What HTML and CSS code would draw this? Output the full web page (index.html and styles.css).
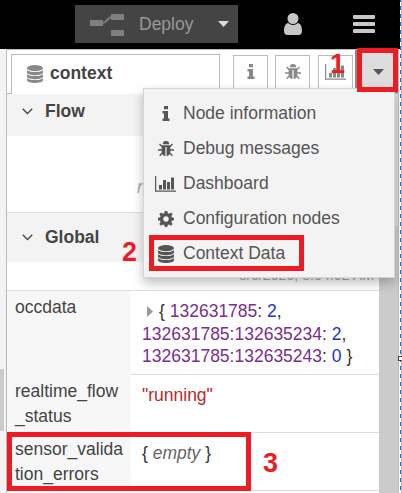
FILE: index.html
```html
<!DOCTYPE html>
<html lang="en">
<head>
<meta charset="utf-8">
<title>Context data</title>
<link rel="stylesheet" href="styles.css">
</head>
<body>
<svg class="defs" width="0" height="0">
  <symbol id="database" viewBox="0 0 16 18">
    <ellipse cx="8" cy="3.1" rx="8" ry="3.1"/>
    <path d="M0 5.200c3 2.500 13 2.500 16 0v2.500c-1 3.300-15 3.300-16 0z"/>
    <path d="M0 9.200c3 2.500 13 2.500 16 0v2.500c-1 3.300-15 3.300-16 0z"/>
    <path d="M0 13.200c3 2.500 13 2.500 16 0v2.100c-1 3.600-15 3.600-16 0z"/>
  </symbol>
  <symbol id="info" viewBox="0 0 8 15">
    <path d="M2 0h4v3.200H2zM.5 5H6v7.400h1.500V15h-7v-2.600H2V7.600H.5z"/>
  </symbol>
  <symbol id="bug" viewBox="0 0 16 16">
    <path d="M4.800 3.200a3.200 3.200 0 0 1 6.400 0z"/>
    <path d="M3.600 4.200h8.800V10c0 3.200-1.600 5-3.800 5V6H7.400v9c-2.200 0-3.800-1.800-3.800-5z"/>
    <path class="line" d="M4 5.400L1.500 2.900M12 5.400l2.500-2.500M4 9H0M12 9h4M4.200 12L1.700 14.700M11.800 12l2.500 2.700"/>
  </symbol>
  <symbol id="chart" viewBox="0 0 21 16">
    <path d="M0 0h1.200v14.600H21v1.200H0zM4 9h3v4.500H4zM8 4h3v9.500H8zM12 6h3v7.500h-3zM16 1.500h3v12h-3z"/>
  </symbol>
  <symbol id="gear" viewBox="0 0 16 16">
    <path fill-rule="evenodd" d="M6.700 0h2.600l.5 2.200 1.300.6L13 1.500 14.700 3.200 13.300 5l.6 1.500 2.100.3v2.500l-2.100.4-.6 1.400 1.300 1.800-1.700 1.800-1.900-1.300-1.300.6L9.300 16H6.700l-.4-2-1.400-.6L3 14.700l-1.700-1.800 1.300-1.800L2 9.700l-2-.4V6.800l2-.3L2.600 5 1.300 3.200 3 1.500l1.900 1.300 1.400-.6zM8 5.300a2.700 2.700 0 1 0 0 5.400 2.700 2.700 0 0 0 0-5.400z"/>
  </symbol>
</svg>
<div class="window">
  <header class="header">
    <button class="deploy">
      <svg class="deploy-icon" viewBox="0 0 34 24"><path d="M0 7h13v6H0zM21 1h13v6H21zM21 17h13v6H21z"/><path class="wire" d="M12 10.200c5 0 5-6.200 10-6.200"/></svg>
      <span>Deploy</span>
      <svg class="deploy-caret" viewBox="0 0 11 6"><path d="M0 0h11L5.500 6z"/></svg>
    </button>
    <svg class="user" viewBox="0 0 18 22"><circle cx="9" cy="5.500" r="5.500"/><path d="M4.200 10C1 10.500 0 14.500 0 18c0 2.500 1.300 4 3.500 4h11c2.200 0 3.500-1.500 3.500-4 0-3.500-1-7.500-4.200-8-2.600 2.600-7 2.600-9.600 0z"/></svg>
    <svg class="burger" viewBox="0 0 22 18"><rect width="22" height="4" rx="1"/><rect y="7" width="22" height="4" rx="1"/><rect y="14" width="22" height="4" rx="1"/></svg>
  </header>
  <div class="workspace">
    <div class="separator"><div class="grip"></div></div>
    <aside class="sidebar">
      <nav class="tabs">
        <div class="tab-active"><svg class="i-db"><use href="#database"/></svg><span>context</span></div>
        <div class="tab first"><svg class="i-info"><use href="#info"/></svg></div>
        <div class="tab second"><svg class="i-bug"><use href="#bug"/></svg></div>
        <div class="tab third"><svg class="i-chart"><use href="#chart"/></svg></div>
        <div class="tab-menu"><svg class="tab-caret" viewBox="0 0 11 6"><path d="M0 0h11L5.500 6z"/></svg></div>
      </nav>
      <div class="body">
        <div class="content">
          <h3 class="section flow"><svg class="chevron" viewBox="0 0 11 7"><path d="M.7.800l4.800 4.700L10.300.800"/></svg>Flow</h3>
          <div class="refresh"><em>re</em></div>
          <h3 class="section global"><svg class="chevron" viewBox="0 0 11 7"><path d="M.7.800l4.800 4.700L10.300.800"/></svg>Global</h3>
          <div class="stamp">8/6/2020, 8:04:02 AM</div>
          <div class="row occ">
            <div class="key">occdata</div>
            <div class="value"><svg class="expand" viewBox="0 0 6 11"><path d="M0 0l6 5.500L0 11z"/></svg>{ <b>132631785</b>: <i>2</i>,<br><b>132631785:132635234</b>: <i>2</i>,<br><b>132631785:132635243</b>: <i>0</i> }</div>
          </div>
          <div class="row status">
            <div class="key">realtime_flow<br>_status</div>
            <div class="value string">"running"</div>
          </div>
          <div class="row errors">
            <div class="key">sensor_valida<br>tion_errors</div>
            <div class="value">{ <em>empty</em> }</div>
          </div>
        </div>
        <div class="scroll"><div class="thumb"></div></div>
      </div>
    </aside>
  </div>
  <div class="menu">
    <div class="item"><span class="icon"><svg class="i-info"><use href="#info"/></svg></span>Node information</div>
    <div class="item"><span class="icon"><svg class="i-bug"><use href="#bug"/></svg></span>Debug messages</div>
    <div class="item"><span class="icon"><svg class="i-chart"><use href="#chart"/></svg></span>Dashboard</div>
    <div class="item"><span class="icon"><svg class="i-gear"><use href="#gear"/></svg></span>Configuration nodes</div>
    <div class="item"><span class="icon"><svg class="i-db"><use href="#database"/></svg></span>Context Data</div>
  </div>
  <div class="edge"></div>
  <div class="handle"></div>
  <div class="box box-one"></div>
  <div class="box box-two"></div>
  <div class="box box-three"></div>
  <div class="num num-one">1</div>
  <div class="num num-two">2</div>
  <div class="num num-three">3</div>
</div>
</body>
</html>
```
FILE: styles.css
```css
* { box-sizing: border-box; }
body {
  margin: 0;
  overflow: hidden;
  font: 17.5px/25px "Liberation Sans", Arial, sans-serif;
  color: #444;
}
svg { display: block; flex: none; fill: currentColor; }
.defs { position: absolute; }
.line { fill: none; stroke: currentColor; stroke-width: 1.4; }
.window {
  position: relative;
  width: 402px;
  height: 493px;
  overflow: hidden;
  display: flex;
  flex-direction: column;
  background: #fff;
}

.header {
  flex: none;
  height: 49px;
  display: flex;
  align-items: flex-start;
  padding: 5px 0 0 75px;
  background: #000;
  color: #c7c7c7;
}
.deploy {
  width: 163px;
  height: 38px;
  display: flex;
  align-items: center;
  padding: 0 0 0 15px;
  border: 0;
  background: #444;
  color: #999;
  font: inherit;
}
.deploy-icon { width: 34px; height: 24px; margin: 2px 15px 0 0; fill: #7f7f7f; }
.wire { fill: none; stroke: #7f7f7f; stroke-width: 2; }
.deploy-caret { width: 11px; height: 6px; margin-left: 25px; fill: #ddd; }
.user { width: 18px; height: 22px; margin: 8px 0 0 46px; }
.burger { width: 22px; height: 18px; margin: 10px 0 0 51px; }

.workspace { flex: 1; min-height: 0; display: flex; }
.separator { flex: none; width: 6px; padding-top: 320px; background: #f3f3f3; }
.grip { width: 4px; height: 62px; background: #ccc; }
.sidebar {
  width: 393px;
  display: flex;
  flex-direction: column;
  border: 1px solid #bbb;
  border-width: 1px 1px 0;
}
.tabs {
  flex: none;
  height: 44px;
  display: flex;
  align-items: flex-end;
  padding-left: 4px;
  border-bottom: 1px solid #bbb;
  color: #888;
}
.tab-active {
  width: 209px;
  height: 40px;
  margin-bottom: -1px;
  display: flex;
  align-items: center;
  gap: 7px;
  padding: 0 0 2px 15px;
  border: 1px solid #bbb;
  border-bottom: 0;
  background: #fff;
  font-weight: bold;
}
.tab-active span { color: #444; }
.tab {
  width: 35px;
  height: 38px;
  display: flex;
  justify-content: center;
  padding-top: 8px;
  border: 1px solid #bbb;
  border-bottom: 0;
}
.first { margin-left: 13px; }
.second { margin-left: 7px; }
.third { margin-left: 8px; }
.tab-menu {
  width: 43px;
  height: 43px;
  margin-left: 2px;
  padding: 19px 0 0 16px;
  border: 2px solid #888;
  border-top: 0;
  background: #ddd;
}
.tab-caret { width: 11px; height: 6px; fill: #555; }
.i-db { width: 16px; height: 18px; }
.i-info { width: 8px; height: 15px; }
.i-bug { width: 16px; height: 16px; }
.i-chart { width: 21px; height: 16px; }
.i-gear { width: 16px; height: 16px; }

.body { flex: 1; min-height: 0; display: flex; }
.content { width: 372px; }
.section {
  display: flex;
  align-items: center;
  margin: 0;
  padding-left: 15px;
  background: #f3f3f3;
  font-size: 17.5px;
}
.flow { height: 42px; padding-bottom: 8px; }
.global { height: 50px; border-top: 1px solid #ddd; }
.chevron { width: 11px; height: 7px; margin-right: 12px; fill: none; stroke: #444; stroke-width: 1.3; }
.refresh { height: 76px; padding: 39px 0 0 130px; color: #aaa; }
.stamp { height: 28px; padding-right: 5px; text-align: right; color: #aaa; font-size: 14.2px; line-height: 26px; }
.row { display: flex; border-top: 1px solid #ddd; }
.occ { height: 84px; }
.status { height: 58px; }
.errors { height: 59px; border-bottom: 1px solid #ddd; }
.key { width: 124px; padding: 4px 0 0 8px; background: #f7f7f7; }
.status .key, .errors .key { margin-top: -1px; padding-top: 5px; }
.value { flex: 1; padding: 9px 0 0 11px; line-height: 22.5px; color: #333; }
.value b { font-weight: normal; color: #792e90; }
.value i { font-style: normal; color: #2033d6; }
.value em { color: #666; }
.value.string { color: #b72828; }
.expand { display: inline-block; width: 6px; height: 11px; margin: 0 6px 0 5px; fill: #999; }
.scroll { width: 19px; padding-top: 132px; background: #e0e0e0; }
.thumb { height: 100%; background: #cbcbcb; }

.menu {
  position: absolute;
  left: 143px;
  top: 88px;
  width: 252px;
  height: 190px;
  padding-top: 7px;
  border: 1px solid #d5d5d5;
  background: #f3f3f3;
  color: #555;
  box-shadow: 0 5px 10px rgba(0, 0, 0, .25);
}
.item { height: 35px; display: flex; align-items: center; padding-left: 10px; }
.icon { width: 29px; display: flex; padding-left: 1px; }
.icon .i-info { margin-left: 7px; }
.icon .i-bug, .icon .i-gear, .icon .i-db { margin-left: 3px; }

.edge {
  position: absolute;
  left: 400px;
  top: 0;
  width: 2px;
  height: 493px;
  border-right: 1px solid #b8b8c0;
  background: repeating-linear-gradient(#0078d7 0 4px, #fff 4px 8px) 0 -2px / 100% 504px;
}
.handle { position: absolute; left: 398px; top: 356px; width: 6px; height: 5px; border: 1px solid #444; background: #fff; }
.box { position: absolute; border: 5px solid #ed1c24; }
.box-one { left: 357px; top: 48px; width: 41px; height: 44px; }
.box-two { left: 149px; top: 235px; width: 155px; height: 36px; }
.box-three { left: 7px; top: 432px; width: 244px; height: 59px; }
.num { position: absolute; color: #ed1c24; font-size: 27px; line-height: 30px; font-weight: bold; }
.num-one { left: 330px; top: 49px; }
.num-two { left: 122px; top: 237px; }
.num-three { left: 263px; top: 448px; }
```
